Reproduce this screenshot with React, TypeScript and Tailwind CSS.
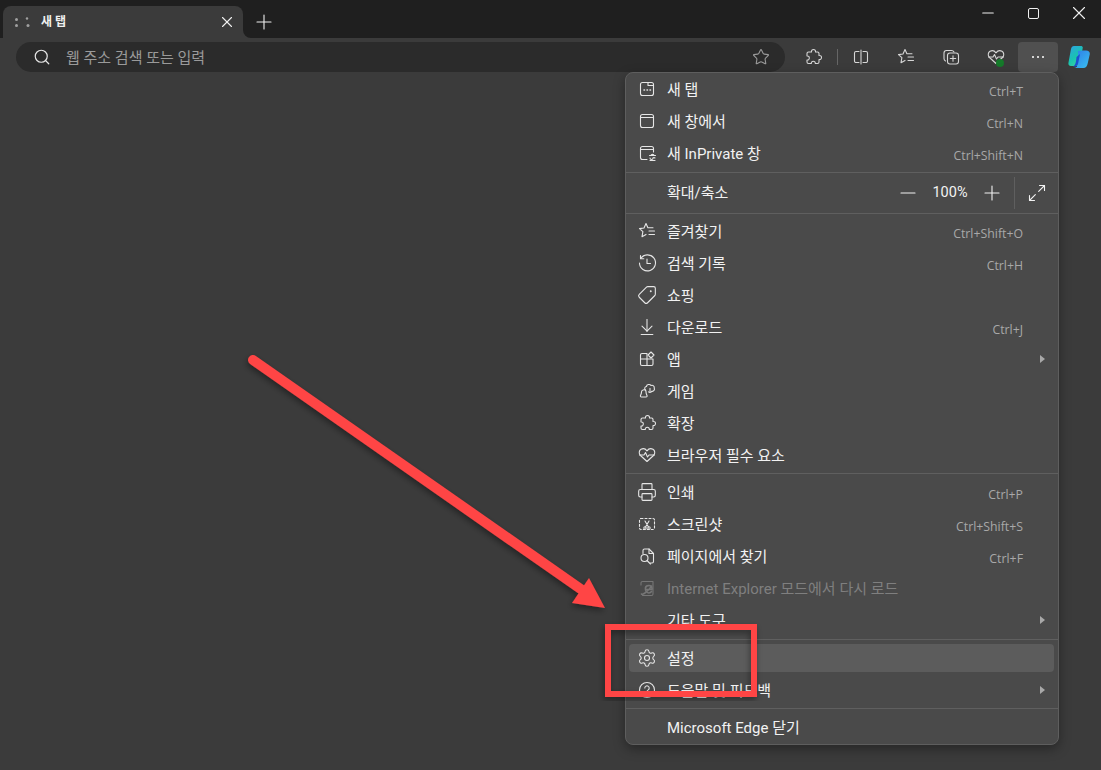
import type { ReactNode } from "react";
import { ArrowDownToLine, Maximize2, Minus, Plus, Printer, Search, Settings, Star, Tag, X } from "lucide-react";

const FONT = "font-['Roboto','Noto_Sans_CJK_KR',sans-serif]";
const KEY_FONT = "font-['Open_Sans',sans-serif]";

function Ico({ children, size = 20 }: { children: ReactNode; size?: number }) {
  return (
    <svg width={size} height={size} viewBox="0 0 20 20" fill="none" stroke="currentColor" strokeWidth="1.1" strokeLinecap="round" strokeLinejoin="round">
      {children}
    </svg>
  );
}

const puzzle = "M10.500 2.500c1.300 0 2.200 1 2 2.500h2c.8 0 1.500.7 1.500 1.500v2c1.600-.3 2.500.8 2.500 2s-.9 2.300-2.500 2v2.500c0 .8-.7 1.500-1.500 1.500h-2.200c.2-1.500-.8-2.300-2-2.300s-2.200.8-2 2.300H5.500c-.8 0-1.500-.7-1.500-1.500V13c1.500.2 2.300-.8 2.300-2S5.500 8.800 4 9V6.500C4 5.700 4.700 5 5.500 5h3c-.2-1.500.7-2.500 2-2.500z";
const starLines = "M9 2.500l1.900 4.300H16M9 2.500 7 7 2.500 7.600l3.400 3.100-.9 5 4-2.300M12 10h5.500M12 13.500h5.500";
const heart = "M10 16.500 3.500 10.500C1.500 8.500 2 5.500 4 4.300c2-1.100 4.500-.5 6 1.500 1.500-2 4-2.600 6-1.500 2 1.200 2.500 4.200.5 6.200L10 16.500z";

const NewTabIcon = () => (
  <Ico><rect x="3.500" y="3.500" width="13" height="13" rx="2" /><path d="M11 3.500V6.500h5.500" /><path d="M7 11h.5M10 11h.5M13 11h.5" strokeWidth="1.500" /></Ico>
);
const WindowIcon = () => (
  <Ico><rect x="3.500" y="3.500" width="13" height="13" rx="2" /><path d="M3.500 6.500h13" /></Ico>
);
const PrivateIcon = () => (
  <Ico><path d="M10 16.500H5.500a2 2 0 0 1-2-2v-9a2 2 0 0 1 2-2h9a2 2 0 0 1 2 2V9" /><path d="M3.500 6.500h13" /><path d="M12.500 12.500h6M14 12.500c0-1.500 3-1.500 3 0M13 15a1.500 1.500 0 0 0 3 0 1.500 1.500 0 0 1 2 0" /><path d="M13 17.500h5" /></Ico>
);
const FavIcon = () => <Ico><path d={starLines} /></Ico>;
const HistoryIcon = () => (
  <Ico><path d="M3.800 5.500A8 8 0 1 1 2.500 10" /><path d="M3.500 2.500v3.300h3.300" /><path d="M10 6v4.500h3.500" /></Ico>
);
const AppsIcon = () => (
  <Ico><path d="M10 4.500H5a1.500 1.500 0 0 0-1.500 1.500v9A1.500 1.500 0 0 0 5 16.500h9.500A1.500 1.500 0 0 0 16 15v-5H3.500M10 4.500v12" /><path d="M14 3l3 3-3 3-3-3z" /></Ico>
);
const GameIcon = () => (
  <Ico><path d="M6 9a2 2 0 0 1 3 2c0 1.500.5 2.500 1 3.500.3.800 0 1.500-1 1.500H4.500c-1 0-1.300-.7-1-1.500.5-1 1-2 1-3.500A2 2 0 0 1 6 9z" /><path d="M8.500 9c-1.500-1.200-.8-3.500 1-3.500 0-2.200 3.500-2.700 4.500-1 1.800-.8 3.800.8 3.200 2.500 1 1.700-.7 3.800-2.500 3.200 0 1-2 1.600-3.200.6" /><path d="M13 7.500v3" /></Ico>
);
const PuzzleIcon = () => <Ico><path d={puzzle} /></Ico>;
const HeartIcon = () => (
  <Ico><path d={heart} /><path d="M2.500 10h4.500l1.500-2.500 2 4.500 1.500-2h5.500" /></Ico>
);
const ShotIcon = () => (
  <Ico><rect x="2.500" y="4.500" width="15" height="11" rx="1.500" strokeDasharray="2 2" /><circle cx="8" cy="14" r="1.200" /><circle cx="12" cy="14" r="1.200" /><path d="M8.500 13 12 7M11.500 13 8 7" /></Ico>
);
const FindIcon = () => (
  <Ico><path d="M6 7.500V4.500a1.500 1.500 0 0 1 1.500-1.500H12l4.500 4.500v8A1.500 1.500 0 0 1 15 17h-1.500" /><path d="M12 3v4.500h4.500" /><circle cx="7.500" cy="12" r="3.500" /><path d="m10 14.500 3.500 3.500" /></Ico>
);
const IeIcon = () => (
  <Ico><path d="M4 7V5a1.500 1.500 0 0 1 1.500-1.500H16V16a1.500 1.500 0 0 1-1.500 1.500H5.500" /><path d="M15 11.500H8.500a3.300 3.300 0 0 1 6.500-1.200M8.500 12a3.300 3.300 0 0 0 6 1.500M4.500 16c1 1.500 8-4 10-8" strokeWidth="1.600" /></Ico>
);
const HelpIcon = () => (
  <Ico><circle cx="10" cy="10" r="7.500" /><path d="M7.800 8a2.200 2.200 0 1 1 3.400 1.900c-.8.500-1.200 1-1.200 1.900" /><path d="M10 14.200h.01" strokeWidth="1.500" /></Ico>
);

type Row = { label: string; icon?: ReactNode; keys?: string; more?: boolean; disabled?: boolean; active?: boolean };

const TOP: Row[] = [
  { label: "새 탭", icon: <NewTabIcon />, keys: "Ctrl+T" },
  { label: "새 창에서", icon: <WindowIcon />, keys: "Ctrl+N" },
  { label: "새 InPrivate 창", icon: <PrivateIcon />, keys: "Ctrl+Shift+N" },
];
const MIDDLE: Row[] = [
  { label: "즐겨찾기", icon: <FavIcon />, keys: "Ctrl+Shift+O" },
  { label: "검색 기록", icon: <HistoryIcon />, keys: "Ctrl+H" },
  { label: "쇼핑", icon: <Tag size={20} strokeWidth={1.1} absoluteStrokeWidth className="-scale-x-100" /> },
  { label: "다운로드", icon: <ArrowDownToLine size={20} strokeWidth={1.1} absoluteStrokeWidth />, keys: "Ctrl+J" },
  { label: "앱", icon: <AppsIcon />, more: true },
  { label: "게임", icon: <GameIcon /> },
  { label: "확장", icon: <PuzzleIcon /> },
  { label: "브라우저 필수 요소", icon: <HeartIcon /> },
];
const TOOLS: Row[] = [
  { label: "인쇄", icon: <Printer size={20} strokeWidth={1.1} absoluteStrokeWidth />, keys: "Ctrl+P" },
  { label: "스크린샷", icon: <ShotIcon />, keys: "Ctrl+Shift+S" },
  { label: "페이지에서 찾기", icon: <FindIcon />, keys: "Ctrl+F" },
  { label: "Internet Explorer 모드에서 다시 로드", icon: <IeIcon />, disabled: true },
  { label: "기타 도구", more: true },
];
const HELP: Row[] = [
  { label: "설정", icon: <Settings size={20} strokeWidth={1.1} absoluteStrokeWidth />, active: true },
  { label: "도움말 및 피드백", icon: <HelpIcon />, more: true },
];

function MenuRow({ row }: { row: Row }) {
  return (
    <div className={`ml-[3px] mr-1 flex items-center rounded ${row.active ? "mb-[2px] mt-[4px] h-7 bg-[#5c5c5c]" : "h-8"} ${row.disabled ? "text-[#7f7f7f]" : "text-[#f2f2f2]"}`}>
      <span className={`flex w-9 shrink-0 justify-center ${row.disabled ? "text-[#767676]" : "text-[#e6e6e6]"}`}>{row.icon}</span>
      <span className="ml-0.5 pt-[2px] text-[15px]">{row.label}</span>
      {row.keys && <span className={`ml-auto pr-[31px] pt-[6px] text-[12.300px] text-[#a8a8a8] ${KEY_FONT}`}>{row.keys}</span>}
      {row.more && <span className="ml-auto mr-[9px] h-0 w-0 border-y-[4px] border-l-[5px] border-y-transparent border-l-[#a8a8a8]" />}
    </div>
  );
}

function Divider({ className = "" }: { className?: string }) {
  return <div className={`h-px bg-[#5f5f5f] ${className}`} />;
}

function Menu() {
  return (
    <div className={`absolute left-[625px] top-[72px] h-[673px] w-[434px] rounded-lg border border-[#5e5e5e] bg-[#4a4a4a] shadow-[0_4px_12px_rgba(0,0,0,0.35)] ${FONT}`}>
      {TOP.map((r) => <MenuRow key={r.label} row={r} />)}
      <Divider className="mt-[3px]" />
      <div className="flex h-10 items-center pl-[41px] text-[15px] text-[#f2f2f2]">
        <span>확대/축소</span>
        <div className="ml-auto flex items-center">
          <Minus size={24} strokeWidth={1.1} absoluteStrokeWidth />
          <span className="w-[60px] text-center text-[14.500px]">100%</span>
          <Plus size={24} strokeWidth={1.1} absoluteStrokeWidth />
          <span className="ml-[10px] h-[32px] w-px bg-[#5f5f5f]" />
          <span className="flex w-[43px] justify-center"><Maximize2 size={20} strokeWidth={1.1} absoluteStrokeWidth /></span>
        </div>
      </div>
      <Divider />
      <div className="h-px" />
      {MIDDLE.map((r) => <MenuRow key={r.label} row={r} />)}
      <Divider className="mt-[2px]" />
      <div className="h-[2px]" />
      {TOOLS.map((r) => <MenuRow key={r.label} row={r} />)}
      <Divider className="mt-[3px]" />
      {HELP.map((r) => <MenuRow key={r.label} row={r} />)}
      <Divider className="mt-[2px]" />
      <div className="h-[2px]" />
      <div className="flex h-8 items-center pl-[41px] pt-[2px] text-[15px] text-[#f2f2f2]">Microsoft Edge 닫기</div>
    </div>
  );
}

function Copilot() {
  return (
    <svg width="26" height="24" viewBox="0 0 26 24">
      <defs>
        <linearGradient id="cpA" x1="0" y1="0" x2="0.6" y2="1"><stop offset="0" stopColor="#2f9fe8" /><stop offset="0.6" stopColor="#19c3b0" /><stop offset="1" stopColor="#37d0a0" /></linearGradient>
        <linearGradient id="cpB" x1="0" y1="0" x2="1" y2="1"><stop offset="0" stopColor="#2d7be8" /><stop offset="1" stopColor="#3ac0f0" /></linearGradient>
      </defs>
      <path d="M8 1h7c1 0 1.500.5 1.800 1.500L14 19c-.3 1.500-1.500 2-3 2H5c-2 0-3-1.500-2.500-3.500L5 4c.4-2 1.500-3 3-3z" fill="url(#cpA)" />
      <path d="M12 6l5-.5h3c2.500 0 4 1.500 3.800 3.500l-2 9c-.5 3-2 5-4.500 5H8c2 0 3.500-1.500 4-4z" fill="url(#cpB)" />
      <path d="M10.500 12l3.500-3-2 10c-.3 1-1 2-2.500 2.500H7c2-1 3-3 3.500-9.500z" fill="#1c4fd0" />
    </svg>
  );
}

function Toolbar() {
  return (
    <div className="flex h-[34px] items-end bg-[#3b3b3b] pl-[16px] text-[#d6d6d6]">
      <div className={`flex h-[30px] w-[769px] items-center rounded-full bg-[#2b2b2b] pl-[17px] pr-[15px] ${FONT}`}>
        <Search size={18} strokeWidth={1.2} absoluteStrokeWidth className="text-[#e6e6e6]" />
        <span className="ml-[15px] pt-[2px] text-[15px] text-[#9a9a9a]">웹 주소 검색 또는 입력</span>
        <Star size={18} strokeWidth={1.1} absoluteStrokeWidth className="ml-auto text-[#9a9a9a]" />
      </div>
      <div className="ml-[18px] flex h-[30px] items-center">
        <Ico><path d={puzzle} /></Ico>
        <span className="ml-[14px] mr-[13px] h-[16px] w-px bg-[#666666]" />
        <Ico><path d="M8 4.500H5a1.500 1.500 0 0 0-1.500 1.500v8A1.500 1.500 0 0 0 5 15.500h3M12 4.500h3a1.500 1.500 0 0 1 1.500 1.500v8a1.500 1.500 0 0 1-1.500 1.500h-3M10 3v14" /></Ico>
        <span className="ml-[25px]"><Ico><path d={starLines} /></Ico></span>
        <span className="ml-[25px]"><Ico><path d="M4.500 14c-1-.5-1.500-1.500-1.500-2.500V6c0-1.500 1-2.500 2.500-2.500h5c1 0 2 .5 2.500 1.500" /><rect x="6.500" y="6" width="11" height="11" rx="2.500" /><path d="M12 8.800v5.400M9.300 11.500h5.400" /></Ico></span>
        <span className="relative ml-[25px]">
          <Ico><path d={heart} /><path d="M2.500 10h4.500l1.500-2.500 2 4.500 1.500-2h5.500" /></Ico>
          <span className="absolute bottom-0 right-[2px] size-[8px] rounded-full bg-[#157a2a]" />
        </span>
        <div className="ml-[12px] flex h-[30px] w-[40px] items-center justify-center gap-[3px] rounded bg-[#505050]">
          <span className="size-[2px] rounded-full bg-white" />
          <span className="size-[2px] rounded-full bg-white" />
          <span className="size-[2px] rounded-full bg-white" />
        </div>
        <span className="ml-[8px]"><Copilot /></span>
      </div>
    </div>
  );
}

function TitleBar() {
  return (
    <div className={`flex h-[38px] items-end bg-[#1f1f1f] pl-[3px] text-[#f0f0f0] ${FONT}`}>
      <div className="relative flex h-[32px] w-[240px] items-center rounded-t-lg bg-[#3b3b3b] pl-[12px]">
        <svg width="16" height="16" viewBox="0 0 16 16" fill="#a0a0a0">
          <circle cx="1.500" cy="5.500" r="1.500" /><circle cx="1.500" cy="11.500" r="1.500" /><circle cx="12" cy="4.500" r="1.200" /><circle cx="13" cy="11.500" r="1.500" />
        </svg>
        <span className="ml-[10px] text-[12px] font-semibold">새 탭</span>
        <X size={18} strokeWidth={1.1} absoluteStrokeWidth className="ml-auto mr-[7px]" />
        <span className="absolute -right-2 bottom-0 size-2 bg-[#3b3b3b]"><span className="block size-2 rounded-bl-lg bg-[#1f1f1f]" /></span>
      </div>
      <div className="mb-[4px] ml-[9px]"><Plus size={24} strokeWidth={1.1} absoluteStrokeWidth /></div>
      <div className="mb-[14px] ml-auto flex items-center">
        <Minus size={18} strokeWidth={1.1} absoluteStrokeWidth />
        <span className="ml-[31px] h-[11px] w-[11px] rounded-[2px] border border-[#f0f0f0]" />
        <X size={22} strokeWidth={1.1} absoluteStrokeWidth className="ml-[29px] mr-[11px]" />
      </div>
    </div>
  );
}

// red arrow and box drawn over the screenshot
function Annotation() {
  return (
    <svg className="pointer-events-none absolute left-0 top-0" width="1101" height="770">
      <defs>
        <filter id="sh" x="-10%" y="-10%" width="120%" height="120%"><feDropShadow dx="-1" dy="3" stdDeviation="3" floodColor="#000" floodOpacity="0.4" /></filter>
      </defs>
      <g filter="url(#sh)" fill="#ff4545" stroke="none">
        <path d="M253 360 585 592" stroke="#ff4545" strokeWidth="10" strokeLinecap="round" />
        <path d="M605 608 572 603 589 578z" />
      </g>
      <rect x="608" y="627" width="146" height="67" fill="none" stroke="#ff4545" strokeWidth="6" filter="url(#sh)" />
    </svg>
  );
}

export default function App() {
  return (
    <div className="relative h-[770px] w-[1101px] overflow-hidden bg-[#3b3b3b]">
      <TitleBar />
      <Toolbar />
      <Menu />
      <Annotation />
    </div>
  );
}
